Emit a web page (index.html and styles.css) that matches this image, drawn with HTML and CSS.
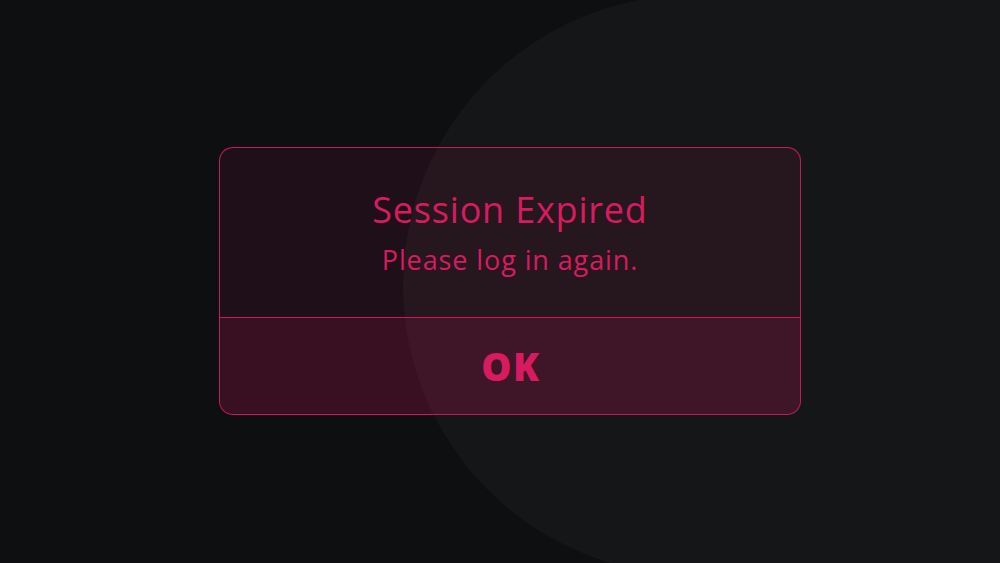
FILE: index.html
```html
<!DOCTYPE html>
<html lang="en">
<head>
<meta charset="utf-8">
<link rel="stylesheet" href="styles.css">
</head>
<body>
<div class="stage">
  <div class="dialog">
    <div class="dialog-body">
      <h1 class="title">Session Expired</h1>
      <p class="message">Please log in again.</p>
    </div>
    <button class="ok">OK</button>
  </div>
</div>
</body>
</html>
```
FILE: styles.css
```css
html, body {
  margin: 0;
  padding: 0;
  width: 1000px;
  height: 563px;
  overflow: hidden;
  background: #0e0f11;
}
.stage {
  position: relative;
  width: 1000px;
  height: 563px;
  display: flex;
  align-items: center;
  justify-content: center;
  font-family: "Open Sans", "Lato", sans-serif;
  overflow: hidden;
}
.stage::before {
  content: "";
  position: absolute;
  left: 403px;
  top: -5px;
  width: 900px;
  height: 580px;
  border-radius: 290px;
  background: #151618;
}
.dialog {
  position: relative;
  z-index: 1;
  width: 580px;
  height: 266px;
  margin-left: 20px;
  margin-top: -1px;
  border: 1px solid rgba(216, 27, 96, 0.9);
  border-radius: 14px;
  overflow: hidden;
  display: flex;
  flex-direction: column;
  background: rgba(216, 27, 96, 0.09);
}
.dialog-body {
  height: 169px;
  display: flex;
  flex-direction: column;
  align-items: center;
  padding-top: 40px;
  box-sizing: border-box;
}
.title {
  margin: 0;
  font-weight: 400;
  font-size: 36px;
  line-height: 44px;
  color: #d81b60;
  letter-spacing: 0.8px;
}
.message {
  margin: 12px 0 0;
  font-weight: 400;
  font-size: 27px;
  line-height: 31px;
  color: #d81b60;
  letter-spacing: 0.9px;
}
.ok {
  flex: 1;
  border: 0;
  border-top: 1px solid rgba(216, 27, 96, 0.9);
  margin: 0;
  background: rgba(216, 27, 96, 0.14);
  color: #d81b60;
  font-family: "Open Sans", "Lato", sans-serif;
  font-weight: 800;
  font-size: 38px;
  letter-spacing: 1.5px;
  padding: 0 0 0 2px;
}
```
